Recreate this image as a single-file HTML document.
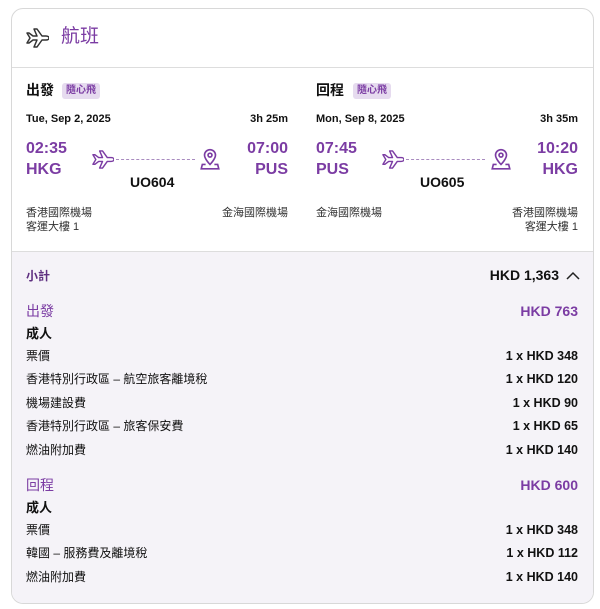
<!DOCTYPE html><html><head><meta charset="utf-8"><style>
body{margin:0;width:600px;height:609px;background:#fff;font-family:"Liberation Sans","Noto Sans CJK TC",sans-serif;color:#111;position:relative;overflow:hidden}
.card{position:absolute;left:11px;top:8px;width:581px;height:594px;border:1px solid #d8d8d8;border-radius:12px;overflow:hidden;background:#fff}
.a{position:absolute;white-space:nowrap;line-height:1}
.p{color:#7b3ca3}
.b{font-weight:bold}
.r{text-align:right}
.badge{position:absolute;background:#e6dbef;color:#7b3ca3;font-size:10px;font-weight:bold;padding:3px 4px;border-radius:3px;line-height:1}
</style></head><body>
<div class="card">
<div style="position:absolute;left:0;top:58px;width:100%;height:1px;background:#ddd"></div>
<div style="position:absolute;left:0;top:242px;width:100%;height:1px;background:#ddd"></div>
<div style="position:absolute;left:0;top:243px;width:100%;height:360px;background:#f5f3f8"></div>
</div>
<svg class="a" style="left:25px;top:27px" width="24" height="22" viewBox="0 0 24 22" fill="none" stroke="#333" stroke-width="1.5" stroke-linejoin="round"><path d="M2 6l3 5-3 5h2l4-3h4l-3 7h3l5-7h4c2 0 3-1 3-2s-1-2-3-2h-4l-5-7h-3l3 7H8L4 6z"/></svg>
<div class="a p" style="left:61px;top:27px;font-size:19px">航班</div>

<!-- leg1 -->
<div class="a b" style="left:26px;top:83px;font-size:14px">出發</div>
<div class="badge" style="left:62px;top:83px">隨心飛</div>
<div class="a b" style="left:26px;top:114px;font-size:11px">Tue, Sep 2, 2025</div>
<div class="a b r" style="right:312px;top:114px;font-size:11px">3h 25m</div>
<div class="a b p" style="left:26px;top:141px;font-size:16px">02:35</div>
<div class="a b p" style="left:26px;top:162px;font-size:16px">HKG</div>
<div class="a b p r" style="right:312px;top:141px;font-size:16px">07:00</div>
<div class="a b p r" style="right:312px;top:162px;font-size:16px">PUS</div>
<svg class="a" style="left:91px;top:149px" width="23" height="21" viewBox="0 0 24 22" fill="none" stroke="#7b3ca3" stroke-width="1.5" stroke-linejoin="round"><path d="M2 6l3 5-3 5h2l4-3h4l-3 7h3l5-7h4c2 0 3-1 3-2s-1-2-3-2h-4l-5-7h-3l3 7H8L4 6z"/></svg>
<div class="a" style="left:116px;top:159px;width:79px;border-top:1px dashed #a98bc0"></div>
<svg class="a" style="left:200px;top:148px" width="20" height="23" viewBox="0 0 18 21" fill="none" stroke="#7b3ca3" stroke-width="1.5"><path d="M9 15s-5-5-5-8.5a5 5 0 0110 0C14 10 9 15 9 15z"/><circle cx="9" cy="6.5" r="1.8"/><path d="M5 15H2l-1 4h16l-1-4h-3"/></svg>
<div class="a b" style="left:130px;top:175px;font-size:14px">UO604</div>
<div class="a" style="left:26px;top:208px;font-size:11px;color:#333">香港國際機場</div>
<div class="a" style="left:26px;top:222px;font-size:11px;color:#333">客運大樓 1</div>
<div class="a r" style="right:312px;top:208px;font-size:11px;color:#333">金海國際機場</div>

<!-- leg2 -->
<div class="a b" style="left:316px;top:83px;font-size:14px">回程</div>
<div class="badge" style="left:353px;top:83px">隨心飛</div>
<div class="a b" style="left:316px;top:114px;font-size:11px">Mon, Sep 8, 2025</div>
<div class="a b r" style="right:22px;top:114px;font-size:11px">3h 35m</div>
<div class="a b p" style="left:316px;top:141px;font-size:16px">07:45</div>
<div class="a b p" style="left:316px;top:162px;font-size:16px">PUS</div>
<div class="a b p r" style="right:22px;top:141px;font-size:16px">10:20</div>
<div class="a b p r" style="right:22px;top:162px;font-size:16px">HKG</div>
<svg class="a" style="left:381px;top:149px" width="23" height="21" viewBox="0 0 24 22" fill="none" stroke="#7b3ca3" stroke-width="1.5" stroke-linejoin="round"><path d="M2 6l3 5-3 5h2l4-3h4l-3 7h3l5-7h4c2 0 3-1 3-2s-1-2-3-2h-4l-5-7h-3l3 7H8L4 6z"/></svg>
<div class="a" style="left:406px;top:159px;width:79px;border-top:1px dashed #a98bc0"></div>
<svg class="a" style="left:491px;top:148px" width="20" height="23" viewBox="0 0 18 21" fill="none" stroke="#7b3ca3" stroke-width="1.5"><path d="M9 15s-5-5-5-8.5a5 5 0 0110 0C14 10 9 15 9 15z"/><circle cx="9" cy="6.5" r="1.8"/><path d="M5 15H2l-1 4h16l-1-4h-3"/></svg>
<div class="a b" style="left:420px;top:175px;font-size:14px">UO605</div>
<div class="a" style="left:316px;top:208px;font-size:11px;color:#333">金海國際機場</div>
<div class="a r" style="right:22px;top:208px;font-size:11px;color:#333">香港國際機場</div>
<div class="a r" style="right:22px;top:222px;font-size:11px;color:#333">客運大樓 1</div>

<!-- summary -->
<div class="a b" style="left:26px;top:270px;font-size:12px;color:#5e2f80">小計</div>
<div class="a b" style="right:41px;top:268px;font-size:14px">HKD 1,363</div>
<svg class="a" style="left:566px;top:271px" width="14" height="9" viewBox="0 0 14 9" fill="none" stroke="#222" stroke-width="1.5"><path d="M1 8l6-6 6 6"/></svg>

<div class="a p" style="left:26px;top:304px;font-size:14px">出發</div>
<div class="a b p" style="right:22px;top:304px;font-size:14px">HKD 763</div>
<div class="a b" style="left:26px;top:327px;font-size:13px">成人</div>
<div class="a" style="left:26px;top:350px;font-size:12px">票價</div><div class="a b" style="right:22px;top:350px;font-size:12.5px">1 x HKD 348</div>
<div class="a" style="left:26px;top:373px;font-size:12px">香港特別行政區 – 航空旅客離境稅</div><div class="a b" style="right:22px;top:373px;font-size:12.5px">1 x HKD 120</div>
<div class="a" style="left:26px;top:397px;font-size:12px">機場建設費</div><div class="a b" style="right:22px;top:397px;font-size:12.5px">1 x HKD 90</div>
<div class="a" style="left:26px;top:420px;font-size:12px">香港特別行政區 – 旅客保安費</div><div class="a b" style="right:22px;top:420px;font-size:12.5px">1 x HKD 65</div>
<div class="a" style="left:26px;top:444px;font-size:12px">燃油附加費</div><div class="a b" style="right:22px;top:444px;font-size:12.5px">1 x HKD 140</div>

<div class="a p" style="left:26px;top:478px;font-size:14px">回程</div>
<div class="a b p" style="right:22px;top:478px;font-size:14px">HKD 600</div>
<div class="a b" style="left:26px;top:501px;font-size:13px">成人</div>
<div class="a" style="left:26px;top:524px;font-size:12px">票價</div><div class="a b" style="right:22px;top:524px;font-size:12.5px">1 x HKD 348</div>
<div class="a" style="left:26px;top:547px;font-size:12px">韓國 – 服務費及離境稅</div><div class="a b" style="right:22px;top:547px;font-size:12.5px">1 x HKD 112</div>
<div class="a" style="left:26px;top:571px;font-size:12px">燃油附加費</div><div class="a b" style="right:22px;top:571px;font-size:12.5px">1 x HKD 140</div>
</body></html>
